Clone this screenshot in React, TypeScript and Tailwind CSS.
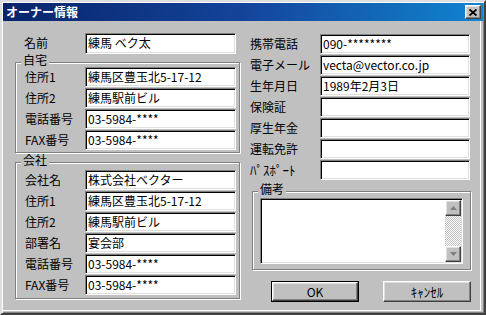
import React from "react";

const font = { fontFamily: '"Noto Sans CJK JP", "Noto Sans", sans-serif' };

const sunken =
  "border border-t-[#808080] border-l-[#808080] border-r-white border-b-white shadow-[inset_1px_1px_0_#000,inset_-1px_-1px_0_#dfdfdf]";
const raised =
  "border border-t-white border-l-white border-r-[#404040] border-b-[#404040] shadow-[inset_-1px_-1px_0_#808080,inset_1px_1px_0_#dfdfdf]";

type Row = { label: string; value: string; wide?: boolean };

const homeRows: Row[] = [
  { label: "住所1", value: "練馬区豊玉北5-17-12" },
  { label: "住所2", value: "練馬駅前ビル" },
  { label: "電話番号", value: "03-5984-****" },
  { label: "FAX番号", value: "03-5984-****" },
];

const companyRows: Row[] = [
  { label: "会社名", value: "株式会社ベクター" },
  { label: "住所1", value: "練馬区豊玉北5-17-12" },
  { label: "住所2", value: "練馬駅前ビル" },
  { label: "部署名", value: "宴会部" },
  { label: "電話番号", value: "03-5984-****" },
  { label: "FAX番号", value: "03-5984-****" },
];

const rightRows: Row[] = [
  { label: "携帯電話", value: "090-********" },
  { label: "電子メール", value: "vecta@vector.co.jp" },
  { label: "生年月日", value: "1989年2月3日" },
  { label: "保険証", value: "" },
  { label: "厚生年金", value: "" },
  { label: "運転免許", value: "" },
  { label: "ﾊﾟｽﾎﾟｰﾄ", value: "", wide: true },
];

function TextBox({ value, width }: { value: string; width: string }) {
  return (
    <div
      className={`${sunken} ${width} h-[20px] bg-white pl-[2px] flex items-center text-[12px] leading-[14px] text-black whitespace-nowrap overflow-hidden`}
    >
      {value}
    </div>
  );
}

function FieldRow({
  row,
  labelWidth,
  inputWidth,
}: {
  row: Row;
  labelWidth: string;
  inputWidth: string;
}) {
  return (
    <div className="flex items-center h-[20px]">
      <div
        className={`${labelWidth} ${row.wide ? "text-[13px]" : "text-[12px]"} leading-[14px] text-black whitespace-nowrap`}
      >
        {row.label}
      </div>
      <TextBox value={row.value} width={inputWidth} />
    </div>
  );
}

function GroupBox({
  title,
  className,
  children,
}: {
  title: string;
  className: string;
  children: React.ReactNode;
}) {
  return (
    <div
      className={`relative border border-[#808080] shadow-[inset_1px_1px_0_#fff,1px_1px_0_#fff] ${className}`}
    >
      <span className="absolute top-[-9px] left-[5px] bg-[#c0c0c0] px-[2px] text-[12px] leading-[12px] text-black">
        {title}
      </span>
      {children}
    </div>
  );
}

function Triangle({ up }: { up: boolean }) {
  return (
    <svg width="7" height="4" viewBox="0 0 7 4" className="block">
      {up ? (
        <polygon points="3.5,0 7,4 0,4" fill="#808080" />
      ) : (
        <polygon points="0,0 7,0 3.5,4" fill="#808080" />
      )}
    </svg>
  );
}

function ScrollButton({ up }: { up: boolean }) {
  return (
    <div className={`${raised} w-[16px] h-[16px] bg-[#c0c0c0] flex items-center justify-center`}>
      <Triangle up={up} />
    </div>
  );
}

export default function App() {
  return (
    <div
      className="w-[486px] h-[315px] bg-[#c0c0c0] border-2 border-t-[#dfdfdf] border-l-[#dfdfdf] border-r-[#404040] border-b-[#404040] shadow-[inset_1px_1px_0_#fff,inset_-1px_-1px_0_#808080] flex flex-col pl-[1px] pr-[1px] pt-0 pb-[1px] select-none"
      style={font}
    >
      {/* title bar */}
      <div className="h-[18px] mt-[1px] flex items-center justify-between bg-gradient-to-r from-[#08246b] via-[#14449a] to-[#1084d0] pl-[3px] pr-[2px]">
        <span className="text-white font-bold text-[12px] leading-[14px]">オーナー情報</span>
        <div className={`${raised} w-[16px] h-[14px] bg-[#c0c0c0] flex items-center justify-center`}>
          <svg width="8" height="7" viewBox="0 0 8 7" className="block">
            <path d="M0.5 0.5 L7.5 6.5 M7.5 0.5 L0.5 6.5" stroke="#000" strokeWidth="1.8" />
          </svg>
        </div>
      </div>

      {/* client area */}
      <div className="flex-1 flex border-r border-b border-white mr-[2px] mb-[1px] pl-[12px]">
        {/* left column */}
        <div className="w-[225px] flex flex-col">
          <div className="mt-[12px] pl-[9px]">
            <FieldRow
              row={{ label: "名前", value: "練馬 ベク太" }}
              labelWidth="w-[61px]"
              inputWidth="w-[151px] h-[21px]"
            />
          </div>

          <GroupBox title="自宅" className="mt-[9px] pt-[4px] pb-[2px] pl-[9px]">
            <div className="flex flex-col gap-[1px]">
              {homeRows.map((r) => (
                <FieldRow key={r.label} row={r} labelWidth="w-[60px]" inputWidth="w-[151px]" />
              ))}
            </div>
          </GroupBox>

          <GroupBox title="会社" className="mt-[9px] pt-[7px] pb-[3px] pl-[9px]">
            <div className="flex flex-col gap-[1px]">
              {companyRows.map((r) => (
                <FieldRow key={r.label} row={r} labelWidth="w-[60px]" inputWidth="w-[151px]" />
              ))}
            </div>
          </GroupBox>
        </div>

        {/* right column */}
        <div className="w-[221px] ml-[10px] flex flex-col">
          <div className="mt-[13px] flex flex-col gap-[1px]">
            {rightRows.map((r) => (
              <FieldRow key={r.label} row={r} labelWidth="w-[70px]" inputWidth="w-[150px]" />
            ))}
          </div>

          <GroupBox title="備考" className="ml-[2px] w-[219px] h-[79px] mt-[11px] pt-[6px] pl-[7px]">
            <div className={`${sunken} w-[203px] h-[66px] bg-white flex justify-end p-[1px]`}>
              <div className="w-[16px] h-full flex flex-col">
                <ScrollButton up />
                <div className="flex-1 bg-[image:repeating-conic-gradient(#c0c0c0_0%_25%,#ffffff_0%_50%)] bg-[length:2px_2px]" />
                <ScrollButton up={false} />
              </div>
            </div>
          </GroupBox>

          <div className="mt-[11px] flex justify-end gap-[24px]">
            <div className="w-[88px] h-[21px] border border-black">
              <div className={`${raised} w-full h-full bg-[#c0c0c0] flex items-center justify-center text-[12px] leading-[14px] text-black`}>
                OK
              </div>
            </div>
            <div className={`${raised} w-[88px] h-[21px] bg-[#c0c0c0] flex items-center justify-center text-[13px] leading-[14px] text-black`}>
              ｷｬﾝｾﾙ
            </div>
          </div>
        </div>
      </div>
    </div>
  );
}
